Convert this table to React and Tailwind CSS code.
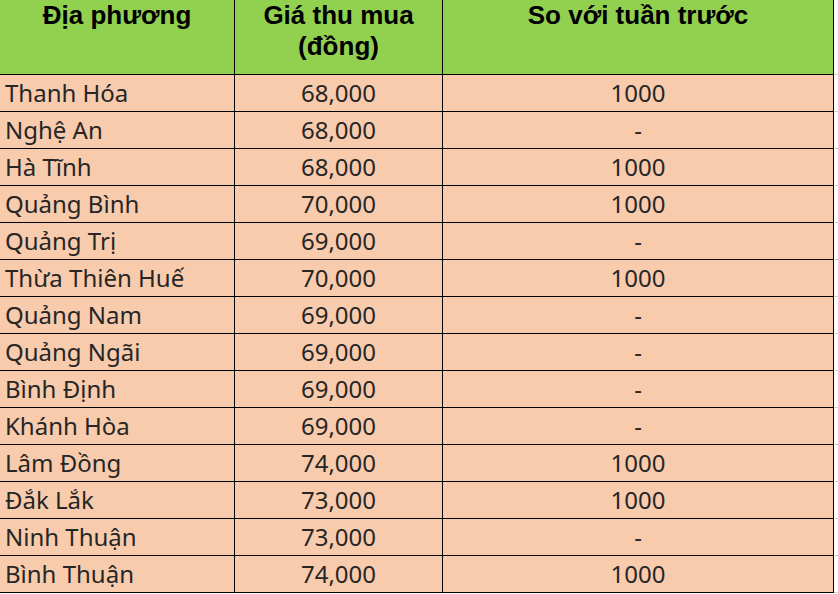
const rows = [
  ['Thanh Hóa', '68,000', '1000'],
  ['Nghệ An', '68,000', '-'],
  ['Hà Tĩnh', '68,000', '1000'],
  ['Quảng Bình', '70,000', '1000'],
  ['Quảng Trị', '69,000', '-'],
  ['Thừa Thiên Huế', '70,000', '1000'],
  ['Quảng Nam', '69,000', '-'],
  ['Quảng Ngãi', '69,000', '-'],
  ['Bình Định', '69,000', '-'],
  ['Khánh Hòa', '69,000', '-'],
  ['Lâm Đồng', '74,000', '1000'],
  ['Đắk Lắk', '73,000', '1000'],
  ['Ninh Thuận', '73,000', '-'],
  ['Bình Thuận', '74,000', '1000'],
];

export default function App() {
  return (
    <div className="w-[838px] h-[594px] bg-white overflow-hidden">
      {/* Header */}
      <div className="flex h-[75px] font-['Liberation_Sans',Arial,sans-serif] font-bold text-[26px] leading-[31px] text-black">
        <div className="w-[235px] bg-[#92D050] border-r border-b border-black text-center">Địa phương</div>
        <div className="w-[208px] bg-[#92D050] border-r border-b border-black text-center">
          Giá thu mua
          <br />
          (đồng)
        </div>
        <div className="w-[391px] bg-[#92D050] border-r border-b border-black text-center">So với tuần trước</div>
        <div className="flex-1 border-b border-[#d4d4d4]" />
      </div>

      {/* Rows */}
      {rows.map(([place, price, diff]) => (
        <div key={place} className="flex h-[37px] font-['Noto_Sans','Open_Sans',sans-serif] text-[24px] leading-[36px] text-[#262626]">
          <div className="w-[235px] bg-[#F8CBAD] border-r border-b border-black pl-[5px]">{place}</div>
          <div className="w-[208px] bg-[#F8CBAD] border-r border-b border-black text-center">{price}</div>
          <div className="w-[391px] bg-[#F8CBAD] border-r border-b border-black text-center">{diff}</div>
          <div className="flex-1 border-b border-[#d4d4d4]" />
        </div>
      ))}
    </div>
  );
}
